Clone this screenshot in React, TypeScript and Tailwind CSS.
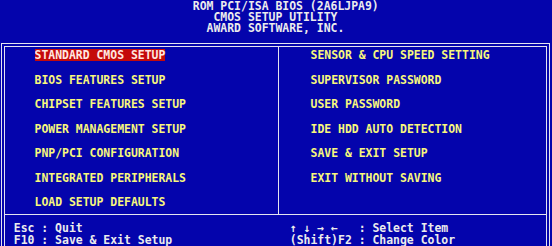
import React from "react";

const Y = "text-[#f8f87c]";

function Item({ label, hi = false }: { label: string; hi?: boolean }) {
  return (
    <div className="h-[24.5px]">
      <span
        className={
          hi
            ? "inline-block h-[12.25px] bg-[#c40a0a] text-[#ffe8e0]"
            : `inline-block h-[12.25px] ${Y}`
        }
      >
        {label}
      </span>
    </div>
  );
}

export default function App() {
  const left = [
    "STANDARD CMOS SETUP",
    "BIOS FEATURES SETUP",
    "CHIPSET FEATURES SETUP",
    "POWER MANAGEMENT SETUP",
    "PNP/PCI CONFIGURATION",
    "INTEGRATED PERIPHERALS",
    "LOAD SETUP DEFAULTS",
  ];
  const right = [
    "SENSOR & CPU SPEED SETTING",
    "SUPERVISOR PASSWORD",
    "USER PASSWORD",
    "IDE HDD AUTO DETECTION",
    "SAVE & EXIT SETUP",
    "EXIT WITHOUT SAVING",
  ];
  return (
    <div className="w-[552px] h-[246px] overflow-hidden bg-[#0404ac] font-['DejaVu_Sans_Mono','Liberation_Mono',monospace] font-bold text-[11.45px] leading-[12.25px] whitespace-pre text-[#ececec]">
      <div className="pt-[1px]">
        <div className="h-[11px] leading-[11px] pl-[28ch]">ROM PCI/ISA BIOS (2A6LJPA9)</div>
        <div className="h-[11px] leading-[11px] pl-[31ch]">CMOS SETUP UTILITY</div>
        <div className="h-[11px] leading-[11px] pl-[30ch]">AWARD SOFTWARE, INC.</div>
      </div>
      <div className="h-[9px]" />
      <div className="ml-[1px] w-[549px] border border-[#e4e4f0] p-[2px] pb-0">
        <div className="border border-b-0 border-[#e4e4f0]">
          <div className="flex h-[167px]">
            <div className="w-[274px] border-r border-[#e4e4f0] pt-[2px] pl-[29.5px]">
              {left.map((l, i) => (
                <Item key={l} label={l} hi={i === 0} />
              ))}
            </div>
            <div className="flex-1 pt-[2px] pl-[31.5px]">
              {right.map((l) => (
                <Item key={l} label={l} />
              ))}
            </div>
          </div>
          <div className="border-t border-[#e4e4f0] flex pt-[7px] h-[60px]">
            <div className="w-[274px] pl-[8.8px]">
              <div className="h-[12.25px]">Esc : Quit</div>
              <div className="h-[12.25px]">F10 : Save &amp; Exit Setup</div>
            </div>
            <div className="flex-1 pl-[10.8px]">
              <div className="h-[12.25px]">↑ ↓ → ←   : Select Item</div>
              <div className="h-[12.25px]">(Shift)F2 : Change Color</div>
            </div>
          </div>
        </div>
      </div>
    </div>
  );
}
